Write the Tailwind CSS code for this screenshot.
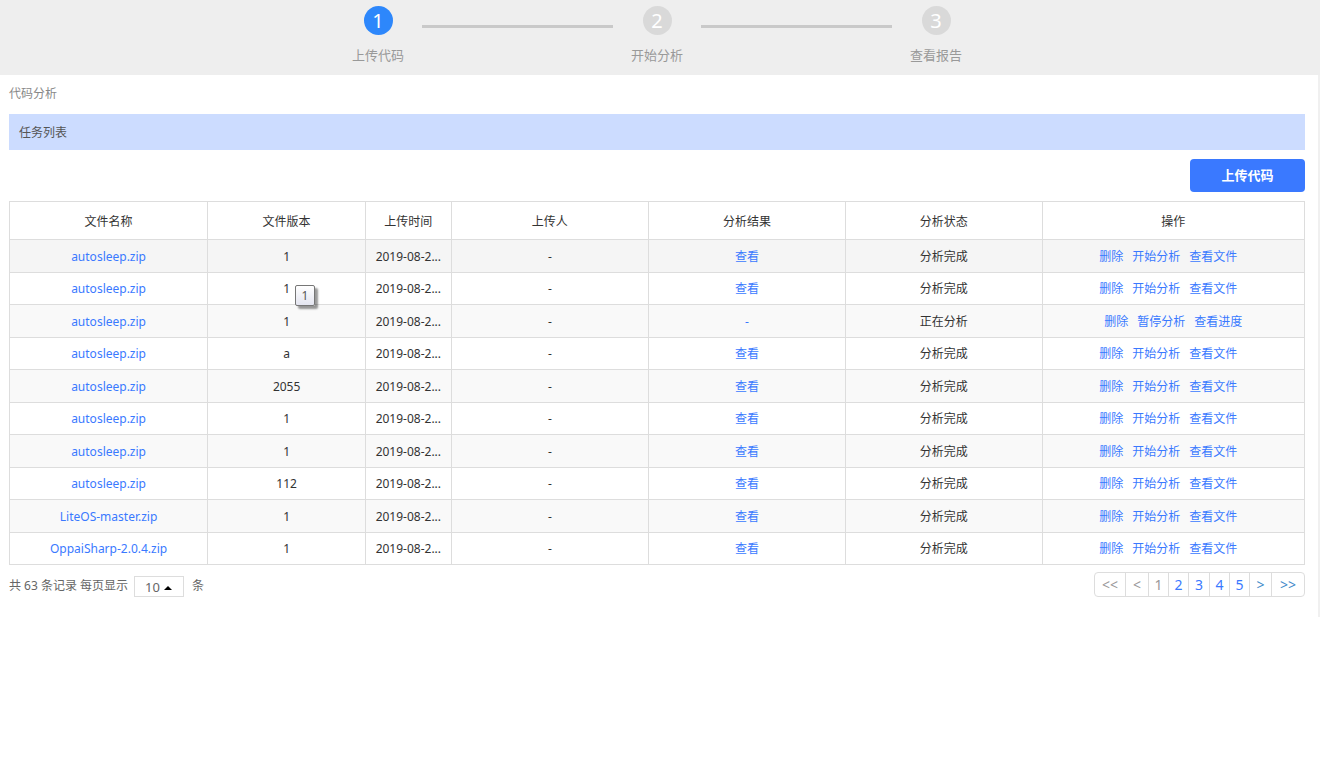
<!DOCTYPE html>
<html lang="zh-CN">
<head>
<meta charset="utf-8">
<meta name="viewport" content="width=device-width, initial-scale=1">
<title>代码分析</title>
<script src="https://cdn.jsdelivr.net/npm/@tailwindcss/browser@4"></script>
</head>
<body class="bg-white font-['Noto_Sans','Noto_Sans_CJK_SC',sans-serif] text-[12px] leading-[18px] text-[#333]">
<header class="bg-[#eee] h-[75px] pl-[9px] pr-[15px]">
  <ol class="flex justify-center text-[13px] text-[#999]">
    <li class="w-[88px] pt-[6px] flex flex-col items-center">
      <span class="size-[29px] rounded-full bg-[#2d87fb] text-white text-[20px] leading-[29px] text-center">1</span>
      <span class="mt-[11px]">上传代码</span>
    </li>
    <li aria-hidden="true" class="w-[191px] mt-[25px] h-[3px] bg-[#c9c9c9]"></li>
    <li class="w-[88px] pt-[6px] flex flex-col items-center">
      <span class="size-[29px] rounded-full bg-[#d9d9d9] text-white text-[20px] leading-[29px] text-center">2</span>
      <span class="mt-[11px]">开始分析</span>
    </li>
    <li aria-hidden="true" class="w-[191px] mt-[25px] h-[3px] bg-[#c9c9c9]"></li>
    <li class="w-[88px] pt-[6px] flex flex-col items-center">
      <span class="size-[29px] rounded-full bg-[#d9d9d9] text-white text-[20px] leading-[29px] text-center">3</span>
      <span class="mt-[11px]">查看报告</span>
    </li>
  </ol>
</header>
<main class="border-r-2 border-[#f0f0f0] pl-[9px] pr-[13px] pb-[20px]">
  <h1 class="pt-[10px] text-[#888]">代码分析</h1>
  <h2 class="mt-[11px] bg-[#ccdcff] px-[10px] pt-px h-[36px] leading-[36px] text-[#555]">任务列表</h2>
  <div class="mt-[9px] flex justify-end">
    <button type="button" class="w-[115px] h-[33px] pb-[2px] rounded-[4px] bg-[#3a79ff] text-white text-[13px] font-bold">上传代码</button>
  </div>
  <div class="relative mt-[9px]">
    <table class="w-full h-[364px] table-fixed border-collapse text-center">
      <thead>
        <tr class="h-[38px]">
          <th class="w-[15.3%] border border-[#ddd] p-0 pt-[2px] font-normal">文件名称</th>
          <th class="w-[12.2%] border border-[#ddd] p-0 pt-[2px] font-normal">文件版本</th>
          <th class="w-[6.6%] border border-[#ddd] p-0 pt-[2px] font-normal">上传时间</th>
          <th class="w-[15.25%] border border-[#ddd] p-0 pt-[2px] font-normal">上传人</th>
          <th class="w-[15.2%] border border-[#ddd] p-0 pt-[2px] font-normal">分析结果</th>
          <th class="w-[15.2%] border border-[#ddd] p-0 pt-[2px] font-normal">分析状态</th>
          <th class="w-[20.25%] border border-[#ddd] p-0 pt-[2px] font-normal">操作</th>
        </tr>
      </thead>
      <tbody id="rows"></tbody>
    </table>
    <div role="tooltip" class="absolute left-[286px] top-[84px] w-[20px] h-[21px] rounded-[2px] border border-[#767676] bg-linear-to-b from-white to-[#e4e5f0] shadow-[3px_3px_2px_rgba(0,0,0,0.4)] text-center leading-[19px] text-[#575757]">1</div>
  </div>
  <div class="mt-[7px] flex items-start justify-between text-[#666]">
    <div class="flex items-start">
      <label for="size" class="mt-[5px]">共 63 条记录 每页显示</label>
      <div class="relative ml-[6px] mt-[4px]">
        <select id="size" class="block appearance-none w-[50px] h-[21px] border border-[#ddd] bg-white pl-[10px] pt-px text-[13px] leading-[19px] text-[#666]">
          <option>10</option><option>20</option><option>50</option>
        </select>
        <svg class="pointer-events-none absolute left-[30px] top-[10px]" width="8" height="4" viewBox="0 0 8 4" aria-hidden="true"><path d="M0 4 4 0l4 4z" fill="#000"/></svg>
      </div>
      <span class="ml-[8px] mt-[5px]">条</span>
    </div>
    <nav aria-label="分页" class="flex h-[25px] rounded-[4px] border border-[#ddd] divide-x divide-[#ddd] text-[14px] leading-[23px] text-center text-[#3a79ff]">
      <a href="#" class="w-[31px] text-[#999]">&lt;&lt;</a>
      <a href="#" class="w-[23px] text-[#999]">&lt;</a>
      <a href="#" class="w-[20px] text-[#999]" aria-current="page">1</a>
      <a href="#" class="w-[20px]">2</a>
      <a href="#" class="w-[21px]">3</a>
      <a href="#" class="w-[20px]">4</a>
      <a href="#" class="w-[20px]">5</a>
      <a href="#" class="w-[22px] text-[#428bca]">&gt;</a>
      <a href="#" class="w-[32px] text-[#428bca]">&gt;&gt;</a>
    </nav>
  </div>
</main>
<script>
const tasks = [
  ['autosleep.zip', '1'], ['autosleep.zip', '1'], ['autosleep.zip', '1', true],
  ['autosleep.zip', 'a'], ['autosleep.zip', '2055'], ['autosleep.zip', '1'],
  ['autosleep.zip', '1'], ['autosleep.zip', '112'],
  ['LiteOS-master.zip', '1'], ['OppaiSharp-2.0.4.zip', '1'],
];
const cell = html => `<td class="border border-[#ddd] p-0 pt-[2px]">${html}</td>`;
const link = text => `<a href="#" class="text-[#3a79ff]">${text}</a>`;
document.getElementById('rows').innerHTML = tasks.map(([name, version, running], i) => {
  const actions = running ? ['删除', '暂停分析', '查看进度'] : ['删除', '开始分析', '查看文件'];
  const shade = i === 0 ? 'bg-[#f5f5f5]' : i % 2 ? 'bg-white' : 'bg-[#f9f9f9]';
  return `<tr class="${shade}">` +
    cell(link(name)) + cell(version) + cell('2019-08-2...') + cell('-') +
    cell(link(running ? '-' : '查看')) + cell(running ? '正在分析' : '分析完成') +
    cell(`<div class="flex justify-center gap-[9px] ${running ? '' : 'pr-[10px]'}">${actions.map(link).join('')}</div>`) + '</tr>';
}).join('');
</script>
</body>
</html>
